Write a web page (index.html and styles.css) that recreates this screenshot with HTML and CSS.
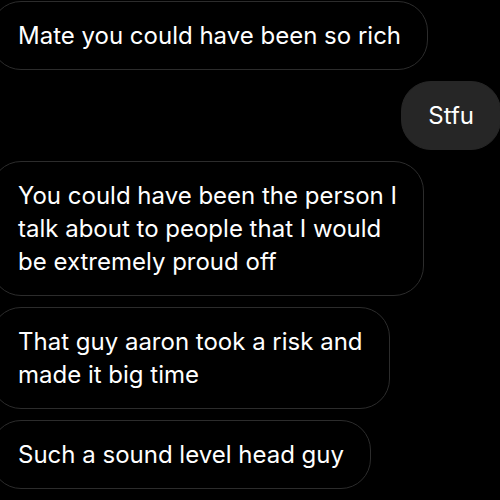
FILE: index.html
```html
<!DOCTYPE html>
<html lang="en">
<head>
    <meta charset="UTF-8">
    <meta name="viewport" content="width=device-width, initial-scale=1.0">
    <title>Messages</title>
    <link rel="stylesheet" href="styles.css">
</head>
<body>
    <div class="thread">
        <div class="msg theirs">Mate you could have been so rich</div>
        <div class="msg mine">Stfu</div>
        <div class="msg theirs">You could have been the person I<br>talk about to people that I would<br>be extremely proud off</div>
        <div class="msg theirs">That guy aaron took a risk and<br>made it big time</div>
        <div class="msg theirs">Such a sound level head guy</div>
        <div class="msg theirs peek"></div>
    </div>
</body>
</html>
```

FILE: styles.css
```css
body {
    margin: 0;
    padding: 0;
    background-color: #000;
    font-family: Inter, "Liberation Sans", sans-serif;
    overflow: hidden;
}

.thread {
    display: flex;
    flex-direction: column;
    gap: 11px;
    padding-top: 1px;
}

.msg {
    width: fit-content;
    padding: 17px 26px;
    border-radius: 30px;
    font-size: 24px;
    line-height: 33px;
    color: #fff;
    white-space: nowrap;
}

.theirs {
    margin-left: -9px;
    border: 1px solid #2c2c2c;
}

.mine {
    align-self: flex-end;
    margin-right: -1px;
    border: 1px solid #262626;
    background-color: #262626;
}

/* next bubble, only its top edge shows */
.peek {
    width: 160px;
    height: 33px;
}
```
